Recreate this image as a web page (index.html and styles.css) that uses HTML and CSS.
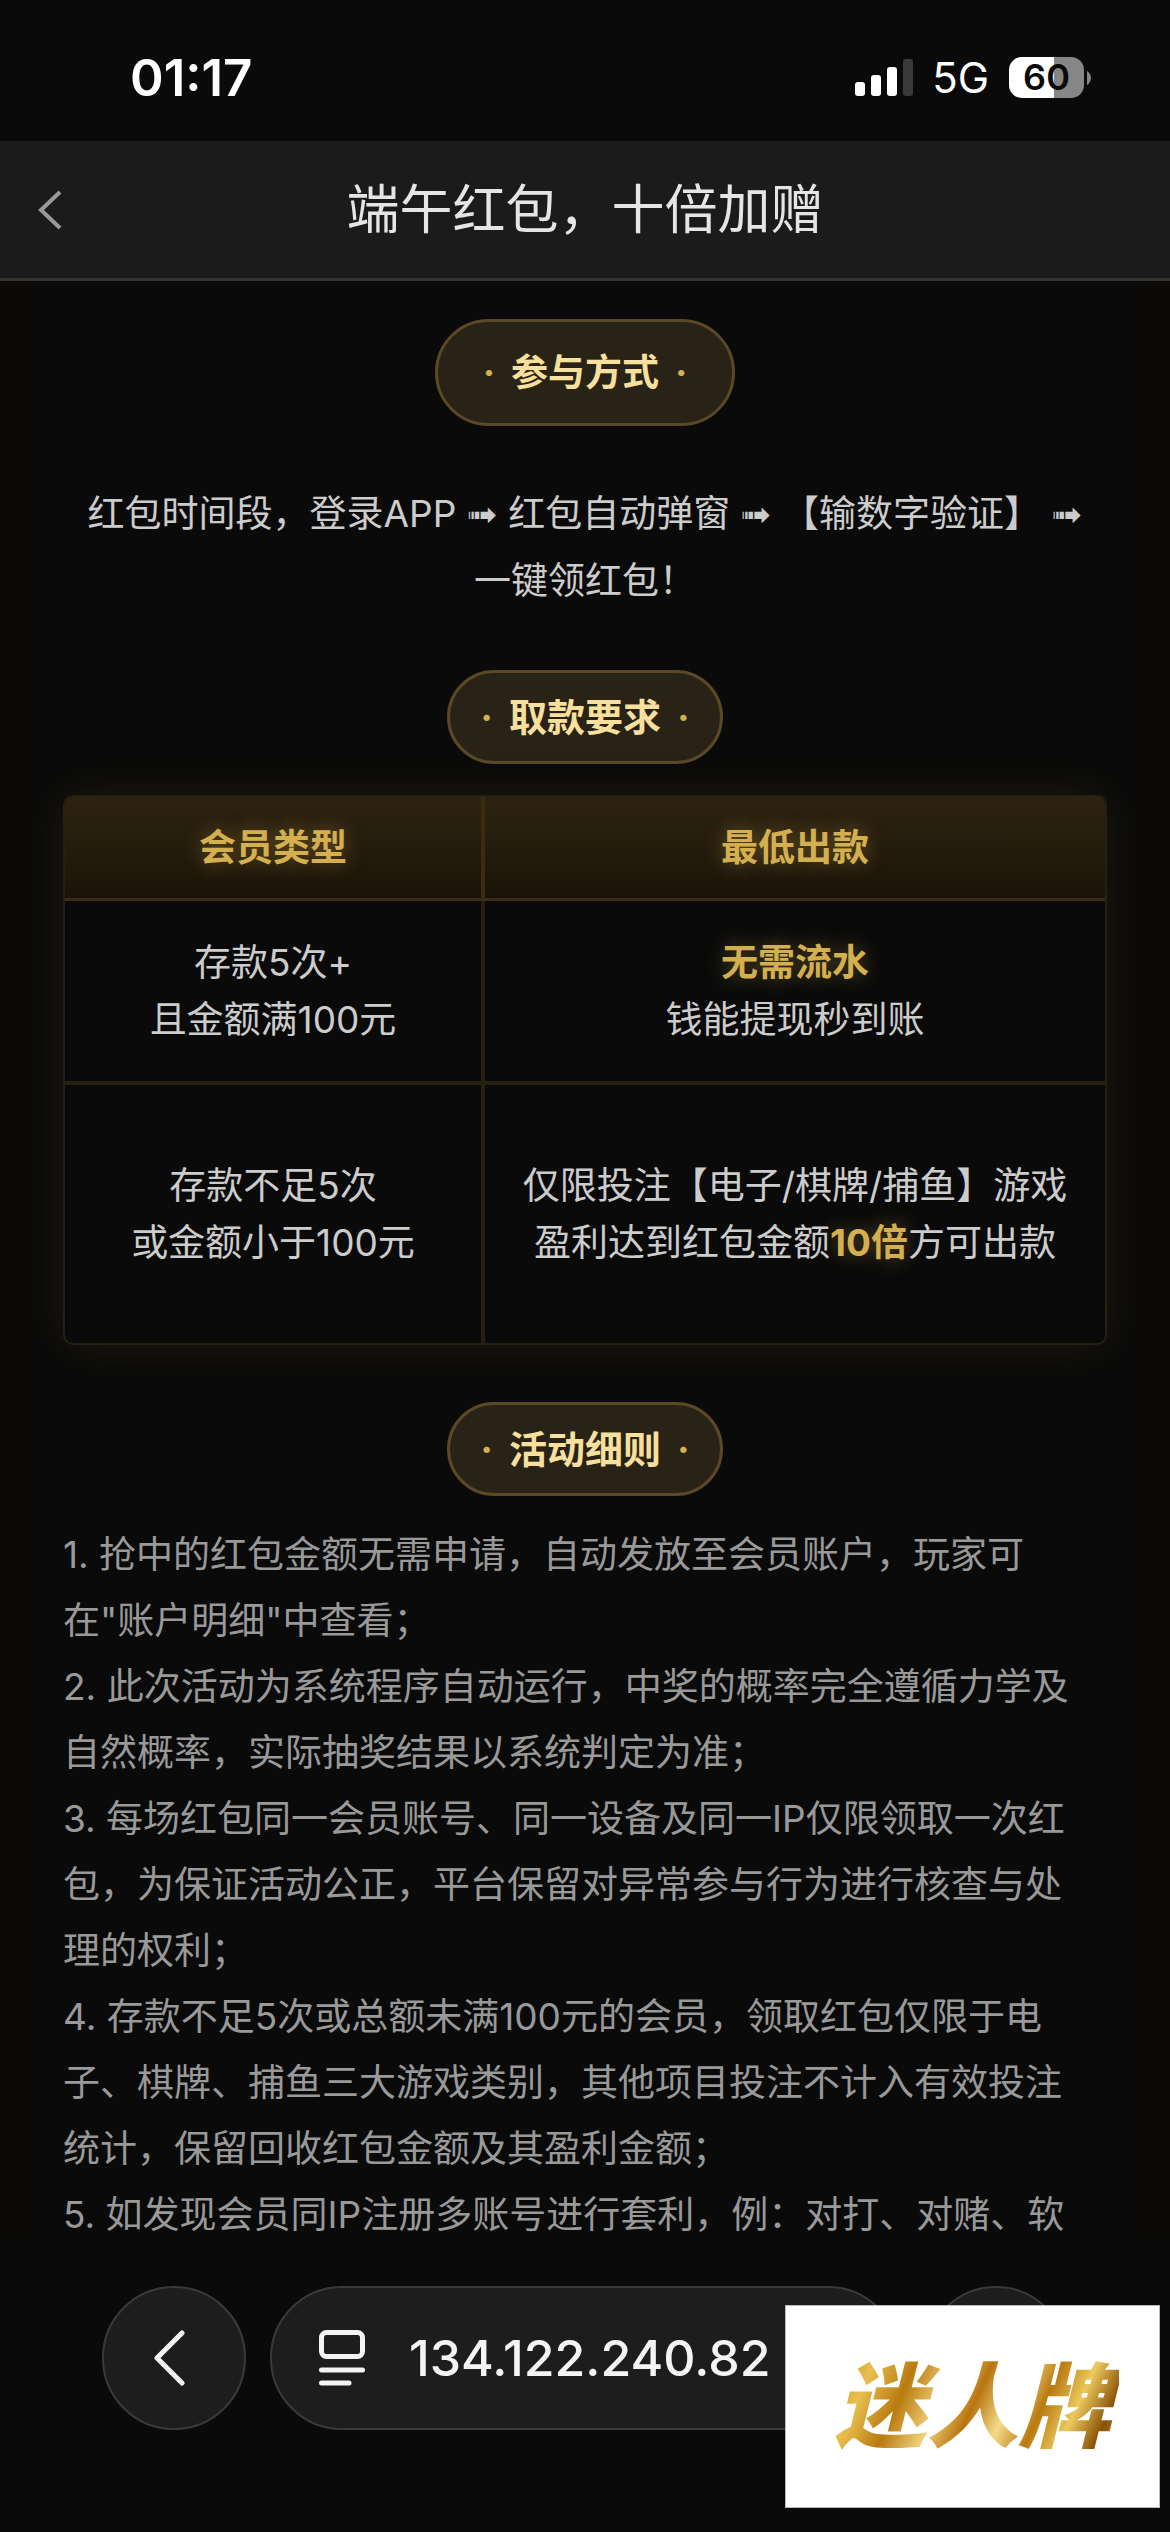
FILE: index.html
```html
<!DOCTYPE html>
<html lang="zh-CN">
<head>
<meta charset="utf-8">
<meta name="viewport" content="width=device-width, initial-scale=1">
<title>端午红包，十倍加赠</title>
<link rel="stylesheet" href="styles.css">
</head>
<body>
<div class="app">
  <div class="status">
    <time class="clock">01:17</time>
    <div class="status-right">
      <svg class="signal" width="58" height="38" viewBox="0 0 58 38" aria-hidden="true">
        <rect x="0" y="23" width="10" height="14" rx="3" fill="#fff"/>
        <rect x="16" y="16" width="10" height="21" rx="3" fill="#fff"/>
        <rect x="32" y="8" width="10" height="29" rx="3" fill="#fff"/>
        <rect x="48" y="0" width="10" height="37" rx="3" fill="#3a3a3a"/>
      </svg>
      <span class="network">5G</span>
      <span class="battery"><span class="battery-level">60</span><svg width="4" height="14" viewBox="0 0 4 14" aria-hidden="true"><path d="M0 0C2 1 4 4 4 7S2 13 0 14Z" fill="#868686"/></svg></span>
    </div>
  </div>

  <header class="header">
    <button class="back" type="button" aria-label="返回">
      <svg width="28" height="40" viewBox="0 0 28 40" fill="none" stroke="#999" stroke-width="4" aria-hidden="true"><path d="M24 2 5 20 24 38"/></svg>
    </button>
    <h1 class="title">端午红包，十倍加赠</h1>
  </header>

  <main class="content">
    <h2 class="pill pill-large"><span class="dot">·</span>参与方式<span class="dot">·</span></h2>
    <p class="steps">红包时间段，登录APP <span class="arrow">➟</span> 红包自动弹窗 <span class="arrow">➟</span> 【输数字验证】 <span class="arrow">➟</span> 一键领红包！</p>

    <h2 class="pill"><span class="dot">·</span>取款要求<span class="dot">·</span></h2>
    <table class="terms">
      <thead>
        <tr><th scope="col">会员类型</th><th scope="col">最低出款</th></tr>
      </thead>
      <tbody>
        <tr><td>存款5次+<br>且金额满100元</td><td><strong>无需流水</strong><br>钱能提现秒到账</td></tr>
        <tr class="tall"><td>存款不足5次<br>或金额小于100元</td><td>仅限投注【电子/棋牌/捕鱼】游戏<br>盈利达到红包金额<strong>10倍</strong>方可出款</td></tr>
      </tbody>
    </table>

    <h2 class="pill"><span class="dot">·</span>活动细则<span class="dot">·</span></h2>
    <div class="rules">
      <p>1. 抢中的红包金额无需申请，自动发放至会员账户，玩家可在"账户明细"中查看；</p>
      <p>2. 此次活动为系统程序自动运行，中奖的概率完全遵循力学及自然概率，实际抽奖结果以系统判定为准；</p>
      <p>3. 每场红包同一会员账号、同一设备及同一IP仅限领取一次红包，为保证活动公正，平台保留对异常参与行为进行核查与处理的权利；</p>
      <p>4. 存款不足5次或总额未满100元的会员，领取红包仅限于电子、棋牌、捕鱼三大游戏类别，其他项目投注不计入有效投注统计，保留回收红包金额及其盈利金额；</p>
      <p>5. 如发现会员同IP注册多账号进行套利，例：对打、对赌、软</p>
    </div>
    <div class="scrollbar"></div>
  </main>

  <nav class="browser">
    <button class="round" type="button" aria-label="后退">
      <svg width="32" height="56" viewBox="0 0 32 56" fill="none" stroke="#f4f4f4" stroke-width="5" stroke-linecap="round" stroke-linejoin="round" aria-hidden="true"><path d="M28 3 3 28 28 53"/></svg>
    </button>
    <button class="address" type="button">
      <svg width="46" height="56" viewBox="0 0 46 56" fill="none" stroke="#f4f4f4" stroke-width="5" stroke-linecap="round" aria-hidden="true"><rect x="2.500" y="2.500" width="41" height="24" rx="5"/><path d="M2.500 40H43.500M2.500 53H30"/></svg>
      <span>134.122.240.82</span>
    </button>
    <button class="round" type="button" aria-label="更多"></button>
  </nav>

  <aside class="brand"><span class="brand-name">迷人牌</span></aside>
</div>
</body>
</html>
```
FILE: styles.css
```css
* { box-sizing: border-box; }

body {
  margin: 0;
  background: #0a0a0a;
  color: #ccc;
  font: 37px/66px Inter, "Noto Sans CJK SC", sans-serif;
}

h1, h2, p { margin: 0; }

button {
  padding: 0;
  border: 0;
  background: none;
  color: inherit;
  font: inherit;
}

svg { display: block; }

.app {
  position: relative;
  display: flex;
  flex-direction: column;
  height: 100vh;
  overflow: hidden;
}

/* Status bar */
.status {
  flex: none;
  display: flex;
  align-items: center;
  justify-content: space-between;
  height: 141px;
  padding: 14px 79px 0 130px;
  color: #fff;
}

.clock { font-size: 51px; font-weight: 600; }

.status-right { display: flex; align-items: center; }

.network { margin: 0 20px 0 19px; font-size: 42px; }

.battery { display: flex; align-items: center; gap: 3px; }

.battery-level {
  width: 75px;
  height: 41px;
  border-radius: 13px;
  background: linear-gradient(90deg, #fff 60%, #868686 60%);
  color: #0a0a0a;
  font-size: 36px;
  font-weight: 600;
  line-height: 41px;
  text-align: center;
}

/* Page header */
.header {
  flex: none;
  display: grid;
  grid-template-columns: 100px 1fr 100px;
  align-items: center;
  height: 140px;
  border-bottom: 3px solid #333;
  background: #1b1b1b;
}

.back { padding-left: 36px; }

.title {
  color: #e5e5e5;
  font-size: 53px;
  font-weight: 400;
  text-align: center;
}

/* Scrolling content */
.content {
  position: relative;
  flex: 1;
  display: flex;
  flex-direction: column;
  align-items: center;
  min-height: 0;
  overflow: hidden;
  padding: 38px 32px 0;
  border: solid #0c0a06;
  border-width: 0 31px;
}

.pill {
  flex: none;
  display: flex;
  align-items: center;
  justify-content: center;
  gap: 16px;
  width: 276px;
  height: 94px;
  border: 3px solid #5a4826;
  border-radius: 54px;
  background: #292216;
  color: #f7e09e;
  font-size: 38px;
  font-weight: 700;
}

.pill-large { width: 300px; height: 107px; font-size: 37px; }

.dot { color: #d4af4f; }

.steps {
  flex: none;
  max-width: 1020px;
  margin: 55px 0 56px;
  text-align: center;
}

.arrow { font-family: "DejaVu Sans", sans-serif; }

.terms {
  flex: none;
  width: 100%;
  margin: 31px 0 57px;
  border: 2px solid #262014;
  border-radius: 10px;
  border-spacing: 0;
  overflow: hidden;
  box-shadow: 0 0 45px rgba(212, 175, 79, 0.1);
  line-height: 57px;
  text-align: center;
}

.terms th, .terms td { padding: 0; }

.terms th {
  height: 104px;
  border-bottom: 3px solid #3a2b12;
  background: linear-gradient(#2e2311, #1a1408);
}

.terms th:first-child { width: 420px; }

.terms th:first-child, .terms td:first-child { border-right: 4px solid #262014; }

.terms th:first-child { border-right-color: #3a2b12; }

.terms td { height: 180px; }

.terms .tall td { height: 262px; border-top: 4px solid #262014; }

.terms th, .terms strong {
  color: #d4af4f;
  font-weight: 700;
  text-shadow: 0 0 20px rgba(212, 175, 79, 0.4);
}

.rules {
  flex: none;
  width: 100%;
  margin-top: 26px;
  padding-right: 24px;
  color: #999;
}

.scrollbar {
  position: absolute;
  top: 729px;
  right: -22px;
  width: 9px;
  height: 928px;
  border-radius: 5px;
  background: #373639;
}

/* Browser toolbar */
.browser {
  flex: none;
  display: flex;
  gap: 24px;
  height: 295px;
  padding: 49px 102px 0;
}

.round, .address {
  display: flex;
  align-items: center;
  height: 144px;
  border: 2px solid #3a3a3a;
  border-radius: 72px;
  background: #1d1d1d;
}

.round { flex: none; justify-content: center; width: 144px; padding-right: 8px; }

.address {
  flex: 1;
  gap: 44px;
  padding-left: 47px;
  color: #f4f4f4;
  font-size: 50px;
  font-weight: 500;
}

/* Floating brand card */
.brand {
  position: absolute;
  right: 10px;
  bottom: 24px;
  display: flex;
  align-items: center;
  justify-content: center;
  width: 375px;
  height: 203px;
  border: 1px solid #bbb;
  background: #fff;
}

.brand-name {
  padding: 0 8px;
  background: linear-gradient(115deg, #b8780c, #e9c050 16%, #b97a10 28%, #f0d27a 40%, #b8740e 50%, #f4dc8c 60%, #b97a10 70%, #ecc95e 80%, #8a5206 90%, #d9a63a);
  background-clip: text;
  color: transparent;
  font-size: 92px;
  font-style: italic;
  font-weight: 900;
  line-height: 120px;
}
```
